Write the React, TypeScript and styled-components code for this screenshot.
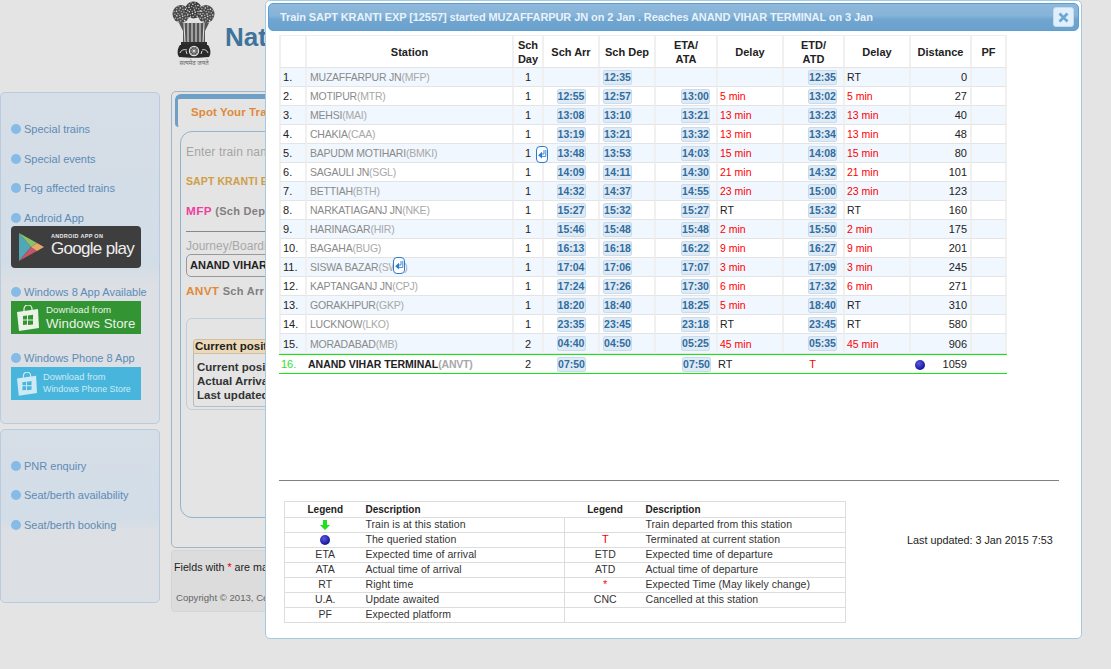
import React from "react";
import styled, { createGlobalStyle } from "styled-components";

const Global = createGlobalStyle`
  html, body { margin: 0; padding: 0; background: #e4e4e4; height: 100%; overflow: hidden; }
  body { font-family: "Liberation Sans", Arial, sans-serif; font-size: 11px; color: #222; }
`;

const Page = styled.div`
  position: relative;
  width: 1111px;
  height: 669px;
  overflow: hidden;
`;
const Header = styled.header`
  height: 91px;
  padding: 1px 0 0 172px;
  box-sizing: border-box;
  display: flex;
  align-items: flex-start;
  gap: 9px;
`;
const SiteTitle = styled.h1`
  margin: 21px 0 0;
  font-size: 26px;
  line-height: 30px;
  font-weight: bold;
  color: #3f739c;
  white-space: nowrap;
`;
const Columns = styled.div`
  display: flex;
  gap: 11px;
  align-items: flex-start;
`;
const Sidebar = styled.aside`
  width: 160px;
  display: flex;
  flex-direction: column;
  gap: 5px;
  padding-top: 1px;
`;
const SidePanel = styled.nav<{ $h: number; $top: number }>`
  box-sizing: border-box;
  height: ${(p) => p.$h}px;
  padding: ${(p) => p.$top}px 0 0 11px;
  border: 1px solid #b9cbdc;
  border-radius: 5px;
  background: linear-gradient(#d6dee7 0%, #d2dde7 50%, #d0dce7 50%, #dcdfe4 58%, #dcdfe4 100%);
  display: flex;
  flex-direction: column;
  align-items: flex-start;
`;
const SideItem = styled.div<{ $mt?: number }>`
  display: flex;
  align-items: center;
  gap: 3px;
  height: 14px;
  margin-top: ${(p) => p.$mt ?? 0}px;
  margin-left: -1px;
  font-size: 11px;
  color: #5d8cb6;
  white-space: nowrap;
`;
const Dot = styled.span`
  display: inline-block;
  width: 10px;
  height: 10px;
  border-radius: 50%;
  background: #85bbe6;
`;
const StoreBadge = styled.div<{ $bg: string; $h: number; $r?: number; $mt: number }>`
  box-sizing: border-box;
  width: 130px;
  height: ${(p) => p.$h}px;
  margin: ${(p) => p.$mt}px 0 0 -1px;
  background: ${(p) => p.$bg};
  border-radius: ${(p) => p.$r ?? 0}px;
  color: #fff;
  display: flex;
  align-items: center;
  overflow: hidden;
`;
const PlayText = styled.div`
  margin: -3px 0 0 6px;
  display: flex;
  flex-direction: column;
  line-height: 1;
`;
const PlaySmall = styled.span`
  font-size: 5.5px;
  font-weight: bold;
  letter-spacing: 0.3px;
  color: #e8e8e8;
`;
const PlayBig = styled.span`
  font-size: 17px;
  letter-spacing: -0.7px;
  margin-top: 1px;
  color: #eee;
`;
const StoreText = styled.div<{ $light?: boolean }>`
  margin-left: ${(p) => (p.$light ? 6 : 7)}px;
  display: flex;
  flex-direction: column;
  color: ${(p) => (p.$light ? "#cfeaf5" : "#e9f3e6")};
`;
const StoreSmall = styled.span<{ $light?: boolean }>`
  font-size: ${(p) => (p.$light ? 9.3 : 9.7)}px;
  line-height: 11px;
`;
const StoreBig = styled.span<{ $light?: boolean }>`
  font-size: ${(p) => (p.$light ? 8.9 : 13.3)}px;
  line-height: ${(p) => (p.$light ? 12 : 15)}px;
  margin-top: ${(p) => (p.$light ? 0 : 1)}px;
  white-space: nowrap;
`;
const MainColumn = styled.main`
  width: 720px;
  display: flex;
  flex-direction: column;
  gap: 2px;
`;
const MainPanel = styled.section`
  box-sizing: border-box;
  height: 457px;
  border: 1px solid #9fb6c9;
  border-radius: 5px;
  padding: 2px 3px 0 3px;
  display: flex;
  flex-direction: column;
`;
const Tab = styled.div`
  box-sizing: border-box;
  width: 140px;
  height: 33px;
  border-top: 5px solid #6d9fc7;
  border-left: 3px solid #6d9fc7;
  border-radius: 6px 0 0 4px;
  padding: 7px 0 0 13px;
  font-size: 11.5px;
  font-weight: bold;
  color: #e0893a;
  letter-spacing: 0.1px;
`;
const InnerBox = styled.div`
  box-sizing: border-box;
  margin: 4px 0 0 5px;
  height: 387px;
  border: 1px solid #8fb5d3;
  border-radius: 12px;
  padding: 13px 5px;
  display: flex;
  flex-direction: column;
  align-items: flex-start;
`;
const Hint = styled.div`
  font-size: 12px;
  letter-spacing: 0.15px;
  color: #a5a5a5;
  line-height: 14px;
`;
const TrainName = styled.div`
  margin-top: 15px;
  font-size: 10.5px;
  font-weight: bold;
  color: #cf9e45;
  letter-spacing: 0.1px;
  line-height: 14px;
`;
const Stop = styled.div<{ $mt: number }>`
  margin-top: ${(p) => p.$mt}px;
  font-size: 11px;
  font-weight: bold;
  letter-spacing: 0.3px;
  color: #808080;
  line-height: 14px;
  white-space: nowrap;
`;
const StopCode = styled.span<{ $c: string }>`
  font-size: 11.8px;
  color: ${(p) => p.$c};
`;
const Divider = styled.div`
  width: 300px;
  margin-top: 13px;
  border-top: 1px solid #888;
`;
const JourneyLabel = styled.div`
  margin-top: 8px;
  font-size: 12px;
  line-height: 13px;
  color: #a8a8a8;
`;
const Select = styled.div`
  box-sizing: border-box;
  width: 300px;
  height: 23px;
  margin-top: 1px;
  border: 1px solid #999;
  border-radius: 5px;
  padding: 0 3px;
  line-height: 21px;
  font-size: 11px;
  font-weight: bold;
  color: #222;
`;
const PositionCard = styled.div`
  box-sizing: border-box;
  width: 400px;
  height: 92px;
  margin-top: 20px;
  border: 1px solid #bcd0e0;
  border-radius: 6px;
  padding: 20px 6px 0;
`;
const PositionHead = styled.div`
  box-sizing: border-box;
  height: 15px;
  background: #ecd9b8;
  border: 1px solid #cdbfa5;
  border-radius: 3px 3px 0 0;
  padding-left: 1px;
  font-size: 11.5px;
  line-height: 13px;
  font-weight: bold;
  color: #222;
`;
const PositionBody = styled.div`
  border: 1px solid #bbb;
  border-top: 0;
  border-radius: 0 0 3px 3px;
  padding: 6px 3px 4px;
  font-size: 11.5px;
  line-height: 14px;
  font-weight: bold;
  color: #333;
  white-space: nowrap;
`;
const FootPanel = styled.footer`
  box-sizing: border-box;
  height: 62px;
  background: #dcdcdc;
  border-radius: 4px;
  border: 1px solid #d4d4d4;
  padding: 9px 2px;
  white-space: nowrap;
`;
const Mandatory = styled.div`
  font-size: 10.7px;
  line-height: 14px;
  color: #222;
`;
const Star = styled.span`
  color: #e00;
`;
const Copyright = styled.div`
  margin: 18px 0 0 2px;
  font-size: 9.6px;
  line-height: 12px;
  color: #666;
`;

const Dialog = styled.div`
  position: absolute;
  left: 265px;
  top: 0;
  box-sizing: border-box;
  width: 817px;
  height: 639px;
  background: #fff;
  border: 1px solid #a6c9e2;
  border-radius: 5px;
  padding: 2px;
`;
const TitleBar = styled.div`
  box-sizing: border-box;
  height: 28px;
  border: 1px solid #5b9fd4;
  border-radius: 5px;
  background: linear-gradient(#8fb9db 0%, #86b3d8 45%, #6fa5cf 60%, #6ba2ce 100%);
  padding-left: 11px;
  display: flex;
  align-items: center;
  justify-content: space-between;
`;
const TitleText = styled.div`
  font-size: 11px;
  font-weight: bold;
  color: #e9f2f9;
  letter-spacing: -0.09px;
  white-space: nowrap;
`;
const CloseBtn = styled.div`
  box-sizing: border-box;
  width: 21px;
  height: 20px;
  margin-right: 4px;
  background: #dfeffc;
  border: 1px solid #c5dbec;
  border-radius: 3px;
  display: flex;
  align-items: center;
  justify-content: center;
`;
const DialogBody = styled.div`
  padding: 4px 0 0 11px;
`;
const TrainTable = styled.table`
  table-layout: fixed;
  width: 728px;
  border-collapse: separate;
  border-spacing: 0;
  font-size: 11px;
`;
const HeadCell = styled.th`
  height: 31px;
  padding: 0;
  font-size: 11px;
  line-height: 14px;
  font-weight: bold;
  color: #222;
  border-top: 1px solid #eee;
  border-right: 2px solid #f0f0f0;
  border-bottom: 1px solid #e4e4e4;
  &:first-child { border-left: 2px solid #f0f0f0; }
`;
const Row = styled.tr<{ $odd: boolean }>`
  background: ${(p) => (p.$odd ? "#f0f7fe" : "#fff")};
`;
const Cell = styled.td<{ $align?: string; $color?: string; $pl?: number; $pr?: number; $h?: number; $fs?: number }>`
  position: relative;
  box-sizing: border-box;
  height: ${(p) => p.$h ?? 19}px;
  padding: 0 ${(p) => p.$pr ?? 0}px 0 ${(p) => p.$pl ?? 0}px;
  text-align: ${(p) => p.$align ?? "left"};
  color: ${(p) => p.$color ?? "#222"};
  font-size: ${(p) => p.$fs ?? 11}px;
  white-space: nowrap;
  overflow: visible;
  border-right: 2px solid #f0f0f0;
  border-bottom: 1px solid #e4e4e4;
  &:first-child { border-left: 2px solid #f0f0f0; }
`;
const LastCell = styled.td<{ $align?: string; $color?: string; $pl?: number; $pr?: number }>`
  box-sizing: border-box;
  height: 20px;
  padding: 0 ${(p) => p.$pr ?? 0}px 0 ${(p) => p.$pl ?? 0}px;
  text-align: ${(p) => p.$align ?? "left"};
  color: ${(p) => p.$color ?? "#222"};
  white-space: nowrap;
  border-top: 1px solid #12e812;
  border-bottom: 1px solid #12e812;
`;
const StationName = styled.span`
  font-size: 10.5px;
  color: #8a8a8a;
  letter-spacing: -0.22px;
`;
const StationCode = styled.span`
  font-size: 10.5px;
  color: #a8a8a8;
  letter-spacing: -0.22px;
`;
const StrongName = styled.b`
  font-size: 10.5px;
  letter-spacing: -0.02px;
  color: #222;
`;
const Time = styled.span`
  display: inline-block;
  box-sizing: border-box;
  width: 29px;
  height: 15px;
  line-height: 13px;
  text-align: center;
  vertical-align: middle;
  background: #dfeaf5;
  border: 1px solid #c9dcee;
  border-radius: 2px;
  font-weight: bold;
  font-size: 10.5px;
  color: #2f6d9f;
`;
const ArrowTip = styled.span<{ $left: number; $top: number }>`
  position: absolute;
  left: ${(p) => p.$left}px;
  top: ${(p) => p.$top}px;
  box-sizing: border-box;
  width: 12px;
  height: 17px;
  background: #fff;
  border: 1px solid #2b7bd1;
  border-radius: 4px;
  display: flex;
  align-items: center;
  justify-content: center;
  z-index: 2;
`;
const Rule = styled.hr`
  width: 780px;
  margin: 106px 0 0 0;
  border: 0;
  border-top: 1px solid #808080;
  height: 0;
`;
const LegendWrap = styled.div`
  display: flex;
  align-items: flex-start;
  margin: 20px 0 0 5px;
`;
const LegendTable = styled.table`
  table-layout: fixed;
  width: 561px;
  border-collapse: collapse;
  font-size: 10.5px;
`;
const LegendHead = styled.th<{ $left?: boolean }>`
  height: 15px;
  padding: 0;
  font-size: 10px;
  text-align: ${(p) => (p.$left ? "left" : "center")};
  font-weight: bold;
  color: #222;
`;
const LegendRow = styled.tr`
  border: 1px solid #ddd;
  height: 15px;
`;
const LegendCell = styled.td<{ $split?: boolean; $left?: boolean }>`
  height: 12px;
  padding: 0 0 2px;
  line-height: 12px;
  letter-spacing: 0.05px;
  text-align: ${(p) => (p.$left ? "left" : "center")};
  color: #333;
  border-left: ${(p) => (p.$split ? "1px solid #ddd" : "0")};
  white-space: nowrap;
`;
const LegendRedCell = styled.td`
  height: 13px;
  padding: 0 0 1px;
  line-height: 13px;
  font-size: 11px;
  text-align: center;
  color: #ff0000;
  border-left: 1px solid #ddd;
  white-space: nowrap;
`;
const Updated = styled.div`
  margin: 33px 0 0 61px;
  font-size: 10.8px;
  line-height: 13px;
  color: #222;
  white-space: nowrap;
`;
const EmblemBox = styled.div`
  width: 44px;
  display: flex;
  flex-direction: column;
  align-items: center;
  flex: none;
`;
const Motto = styled.span`
  font-family: "Noto Sans", "DejaVu Sans", sans-serif;
  font-size: 6px;
  line-height: 8px;
  color: #666;
  white-space: nowrap;
`;

const BlueBall = ({ s = 10 }: { s?: number }) => (
  <svg width={s} height={s} viewBox="0 0 10 10" style={{ verticalAlign: "middle" }}>
    <defs>
      <radialGradient id="ball" cx="40%" cy="35%" r="65%">
        <stop offset="0" stopColor="#5a5ae0" />
        <stop offset="1" stopColor="#12129a" />
      </radialGradient>
    </defs>
    <circle cx="5" cy="5" r="5" fill="url(#ball)" />
  </svg>
);
const GreenArrow = () => (
  <svg width="10" height="10" viewBox="0 0 10 10" style={{ verticalAlign: "middle" }}>
    <path d="M3 0h4v5h3L5 10 0 5h3z" fill="#1fe01f" />
  </svg>
);
const ReturnArrow = () => (
  <svg width="10" height="13" viewBox="0 0 10 13">
    <path d="M5 3.8 1.2 7.2 5 10.6z" fill="#2b7bd1" />
    <path d="M5 6H7V2M5 8.4H8.8V2" fill="none" stroke="#2b7bd1" strokeWidth="0.9" />
  </svg>
);

const speck = (cx: number, cy: number, rx: number, ry: number, n: number) =>
  Array.from({ length: n }, (_, i) => {
    const a = i * 2.39996;
    const d = Math.sqrt((i + 0.5) / n);
    return [cx + Math.cos(a) * d * rx, cy + Math.sin(a) * d * ry] as const;
  });

const Emblem = () => (
  <svg width="44" height="58" viewBox="0 0 44 58" style={{ display: "block" }}>
    <ellipse cx="9" cy="13" rx="8.5" ry="9" fill="#4a4a4a" />
    <ellipse cx="34" cy="13" rx="8.5" ry="9" fill="#4a4a4a" />
    <ellipse cx="21.5" cy="9" rx="8.5" ry="8.5" fill="#3a3a3a" />
    {[...speck(9, 13, 8, 8.5, 30), ...speck(34, 13, 8, 8.5, 30), ...speck(21.5, 9, 8, 8, 30)].map(([x, y], i) => (
      <circle key={i} cx={x} cy={y} r={0.8} fill={i % 3 === 0 ? "#e4e4e4" : "#a8a8a8"} />
    ))}
    <path d="M7 22h30l-4 8v12H11V30z" fill="#555" />
    <path d="M12 22l1 20M16 21v21M20 20v22M24 20v22M28 21v21M32 22l-1 20" stroke="#dcdcdc" strokeWidth="1.1" />
    <path d="M9 41h26v3H9z" fill="#2f2f2f" />
    <path d="M8 44c8-1 20-1 28 0 3 4 3 9 1 12-9 1-21 1-30 0-2-3-2-8 1-12z" fill="#2a2a2a" />
    <circle cx="22" cy="50" r="4.6" fill="#555" stroke="#e0e0e0" strokeWidth="1.2" />
    <circle cx="22" cy="50" r="1.3" fill="#e0e0e0" />
    <path d="M22 45.5v9M17.5 50h9M18.8 46.8l6.4 6.4M25.2 46.8l-6.4 6.4" stroke="#cfcfcf" strokeWidth=".5" />
    <path d="M8 52c1-3 4-4 7-3M14 50l1 3M36 52c-1-3-4-4-6-3M30 50l-1 3" stroke="#ddd" strokeWidth="1" fill="none" />
  </svg>
);
const PlayLogo = () => (
  <svg width="26" height="28" viewBox="0 0 26 28" style={{ marginLeft: 8, flex: "none" }}>
    <path d="M0 0 12 14 0 28z" fill="#4fa7b8" />
    <path d="M0 0 18 10 12 14z" fill="#8cc06a" />
    <path d="M0 28 18 18 12 14z" fill="#c5566a" />
    <path d="M18 10 25 14 18 18 12 14z" fill="#e8a86a" />
  </svg>
);
const StoreBag = ({ fill, tile, w, h }: { fill: string; tile: string; w: number; h: number }) => (
  <svg width={w} height={h} viewBox="0 0 22 26" style={{ marginLeft: 6, flex: "none" }}>
    <path d="M7 7V4a4 4 0 0 1 8 0v3" fill="none" stroke={fill} strokeWidth="1.2" />
    <path d="M0 7 21 4 22 23 2 26z" fill={fill} />
    <path d="M6 11l4-.5v4H6zM11 10.4l5-.6v4.7h-5zM6 15.5h4v4l-4 .4zM11 15.5h5v3.9l-5 .5z" fill={tile} />
  </svg>
);

const cols = [28, 207, 30, 56, 56, 62, 66, 61, 66, 61, 35];

type Stn = [string, string, string, string, string, string, string, string, string, string];
const rows: Stn[] = [
  ["MUZAFFARPUR JN", "MFP", "1", "", "12:35", "", "", "12:35", "RT", "0"],
  ["MOTIPUR", "MTR", "1", "12:55", "12:57", "13:00", "5 min", "13:02", "5 min", "27"],
  ["MEHSI", "MAI", "1", "13:08", "13:10", "13:21", "13 min", "13:23", "13 min", "40"],
  ["CHAKIA", "CAA", "1", "13:19", "13:21", "13:32", "13 min", "13:34", "13 min", "48"],
  ["BAPUDM MOTIHARI", "BMKI", "1", "13:48", "13:53", "14:03", "15 min", "14:08", "15 min", "80"],
  ["SAGAULI JN", "SGL", "1", "14:09", "14:11", "14:30", "21 min", "14:32", "21 min", "101"],
  ["BETTIAH", "BTH", "1", "14:32", "14:37", "14:55", "23 min", "15:00", "23 min", "123"],
  ["NARKATIAGANJ JN", "NKE", "1", "15:27", "15:32", "15:27", "RT", "15:32", "RT", "160"],
  ["HARINAGAR", "HIR", "1", "15:46", "15:48", "15:48", "2 min", "15:50", "2 min", "175"],
  ["BAGAHA", "BUG", "1", "16:13", "16:18", "16:22", "9 min", "16:27", "9 min", "201"],
  ["SISWA BAZAR", "SWZ", "1", "17:04", "17:06", "17:07", "3 min", "17:09", "3 min", "245"],
  ["KAPTANGANJ JN", "CPJ", "1", "17:24", "17:26", "17:30", "6 min", "17:32", "6 min", "271"],
  ["GORAKHPUR", "GKP", "1", "18:20", "18:40", "18:25", "5 min", "18:40", "RT", "310"],
  ["LUCKNOW", "LKO", "1", "23:35", "23:45", "23:18", "RT", "23:45", "RT", "580"],
  ["MORADABAD", "MB", "2", "04:40", "04:50", "05:25", "45 min", "05:35", "45 min", "906"],
];
const delayColor = (d: string) => (d === "RT" ? "#222" : "#f00");

const legend: [React.ReactNode, string, string, string][] = [
  [<GreenArrow />, "Train is at this station", "", "Train departed from this station"],
  [<BlueBall />, "The queried station", "T", "Terminated at current station"],
  ["ETA", "Expected time of arrival", "ETD", "Expected time of departure"],
  ["ATA", "Actual time of arrival", "ATD", "Actual time of departure"],
  ["RT", "Right time", "*", "Expected Time (May likely change)"],
  ["U.A.", "Update awaited", "CNC", "Cancelled at this station"],
  ["PF", "Expected platform", "", ""],
];

export default function App() {
  return (
    <Page>
      <Global />
      <Header>
        <EmblemBox>
          <Emblem />
          <Motto>सत्यमेव जयते</Motto>
        </EmblemBox>
        <SiteTitle>National Train Enquiry System</SiteTitle>
      </Header>
      <Columns>
        <Sidebar>
          <SidePanel $h={332} $top={29}>
            <SideItem><Dot />Special trains</SideItem>
            <SideItem $mt={16}><Dot />Special events</SideItem>
            <SideItem $mt={15}><Dot />Fog affected trains</SideItem>
            <SideItem $mt={16}><Dot />Android App</SideItem>
            <StoreBadge $bg="#3e3e3e" $h={42} $r={4} $mt={1}>
              <PlayLogo />
              <PlayText>
                <PlaySmall>ANDROID APP ON</PlaySmall>
                <PlayBig>Google play</PlayBig>
              </PlayText>
            </StoreBadge>
            <SideItem $mt={17}><Dot />Windows 8 App Available</SideItem>
            <StoreBadge $bg="#339433" $h={33} $mt={2}>
              <StoreBag fill="#e9f3e6" tile="#339433" w={22} h={26} />
              <StoreText>
                <StoreSmall>Download from</StoreSmall>
                <StoreBig>Windows Store</StoreBig>
              </StoreText>
            </StoreBadge>
            <SideItem $mt={17}><Dot />Windows Phone 8 App</SideItem>
            <StoreBadge $bg="#48b6dc" $h={33} $mt={2}>
              <StoreBag fill="#cfeaf5" tile="#48b6dc" w={20} h={24} />
              <StoreText $light>
                <StoreSmall $light>Download from</StoreSmall>
                <StoreBig $light>Windows Phone Store</StoreBig>
              </StoreText>
            </StoreBadge>
          </SidePanel>
          <SidePanel $h={174} $top={29}>
            <SideItem><Dot />PNR enquiry</SideItem>
            <SideItem $mt={15}><Dot />Seat/berth availability</SideItem>
            <SideItem $mt={16}><Dot />Seat/berth booking</SideItem>
          </SidePanel>
        </Sidebar>
        <MainColumn>
          <MainPanel>
            <Tab>Spot Your Train</Tab>
            <InnerBox>
              <Hint>Enter train name / number</Hint>
              <TrainName>SAPT KRANTI EXP</TrainName>
              <Stop $mt={16}><StopCode $c="#ee3fa0">MFP</StopCode> (Sch Dep 12:35)</Stop>
              <Divider />
              <JourneyLabel>Journey/Boarding station</JourneyLabel>
              <Select>ANAND VIHAR TERMINAL</Select>
              <Stop $mt={7}><StopCode $c="#e08a3a">ANVT</StopCode> Sch Arr 07:50</Stop>
              <PositionCard>
                <PositionHead>Current position</PositionHead>
                <PositionBody>
                  Current position: Terminated<br />
                  Actual Arrival: 07:50<br />
                  Last updated: 3 Jan 2015
                </PositionBody>
              </PositionCard>
            </InnerBox>
          </MainPanel>
          <FootPanel>
            <Mandatory>Fields with <Star>*</Star> are mandatory</Mandatory>
            <Copyright>Copyright © 2013, Centre for Railway Information Systems</Copyright>
          </FootPanel>
        </MainColumn>
      </Columns>

      <Dialog>
        <TitleBar>
          <TitleText>Train SAPT KRANTI EXP [12557] started MUZAFFARPUR JN on 2 Jan . Reaches ANAND VIHAR TERMINAL on 3 Jan</TitleText>
          <CloseBtn>
            <svg width="11" height="11" viewBox="0 0 11 11">
              <path d="M1.5 1.5l8 8M9.5 1.5l-8 8" stroke="#6ea6d2" strokeWidth="2.6" />
            </svg>
          </CloseBtn>
        </TitleBar>
        <DialogBody>
          <TrainTable>
            <colgroup>
              {cols.map((w, i) => <col key={i} style={{ width: w }} />)}
            </colgroup>
            <thead>
              <tr>
                <HeadCell />
                <HeadCell>Station</HeadCell>
                <HeadCell>Sch<br />Day</HeadCell>
                <HeadCell>Sch Arr</HeadCell>
                <HeadCell>Sch Dep</HeadCell>
                <HeadCell>ETA/<br />ATA</HeadCell>
                <HeadCell>Delay</HeadCell>
                <HeadCell>ETD/<br />ATD</HeadCell>
                <HeadCell>Delay</HeadCell>
                <HeadCell>Distance</HeadCell>
                <HeadCell>PF</HeadCell>
              </tr>
            </thead>
            <tbody>
              {rows.map((r, i) => {
                const h = i === rows.length - 1 ? 20 : 19;
                return (
                  <Row key={i} $odd={i % 2 === 0}>
                    <Cell $pl={2} $h={h}>{i + 1}.</Cell>
                    <Cell $pl={3}>
                      <StationName>{r[0]}</StationName>
                      <StationCode>({r[1]})</StationCode>
                      {i === 10 && <ArrowTip $left={86} $top={-1}><ReturnArrow /></ArrowTip>}
                    </Cell>
                    <Cell $align="center">
                      {r[2]}
                      {i === 4 && <ArrowTip $left={22} $top={2}><ReturnArrow /></ArrowTip>}
                    </Cell>
                    <Cell $align="center">{r[3] && <Time>{r[3]}</Time>}</Cell>
                    <Cell $pl={3}>{r[4] && <Time>{r[4]}</Time>}</Cell>
                    <Cell $align="right" $pr={6}>{r[5] && <Time>{r[5]}</Time>}</Cell>
                    <Cell $pl={2} $fs={10.5} $color={delayColor(r[6])}>{r[6]}</Cell>
                    <Cell $align="right" $pr={6}>{r[7] && <Time>{r[7]}</Time>}</Cell>
                    <Cell $pl={2} $fs={10.5} $color={delayColor(r[8])}>{r[8]}</Cell>
                    <Cell $align="right" $pr={3}>{r[9]}</Cell>
                    <Cell />
                  </Row>
                );
              })}
              <tr>
                <LastCell $pl={2} $color="#30e030">16.</LastCell>
                <LastCell $pl={1}>
                  <StrongName>ANAND VIHAR TERMINAL</StrongName>
                  <StationCode><b>(ANVT)</b></StationCode>
                </LastCell>
                <LastCell $align="center" $pr={2}>2</LastCell>
                <LastCell $align="center" $pr={1}><Time>07:50</Time></LastCell>
                <LastCell />
                <LastCell $align="right" $pr={7}><Time>07:50</Time></LastCell>
                <LastCell>RT</LastCell>
                <LastCell $align="center" $pr={4} $color="#f00">T</LastCell>
                <LastCell />
                <LastCell $pl={4} $pr={5}>
                  <BlueBall />
                  <span style={{ float: "right" }}>1059</span>
                </LastCell>
                <LastCell />
              </tr>
            </tbody>
          </TrainTable>
          <Rule />
          <LegendWrap>
            <LegendTable>
              <colgroup>
                <col style={{ width: 81 }} />
                <col style={{ width: 199 }} />
                <col style={{ width: 81 }} />
                <col style={{ width: 200 }} />
              </colgroup>
              <tbody>
                <LegendRow>
                  <LegendHead>Legend</LegendHead>
                  <LegendHead $left>Description</LegendHead>
                  <LegendHead>Legend</LegendHead>
                  <LegendHead $left>Description</LegendHead>
                </LegendRow>
                {legend.map((l, i) => (
                  <LegendRow key={i}>
                    <LegendCell>{l[0]}</LegendCell>
                    <LegendCell $left>{l[1]}</LegendCell>
                    {l[2] === "T" || l[2] === "*" ? (
                      <LegendRedCell>{l[2]}</LegendRedCell>
                    ) : (
                      <LegendCell $split>{l[2]}</LegendCell>
                    )}
                    <LegendCell $left>{l[3]}</LegendCell>
                  </LegendRow>
                ))}
              </tbody>
            </LegendTable>
            <Updated>Last updated: 3 Jan 2015 7:53</Updated>
          </LegendWrap>
        </DialogBody>
      </Dialog>
    </Page>
  );
}
